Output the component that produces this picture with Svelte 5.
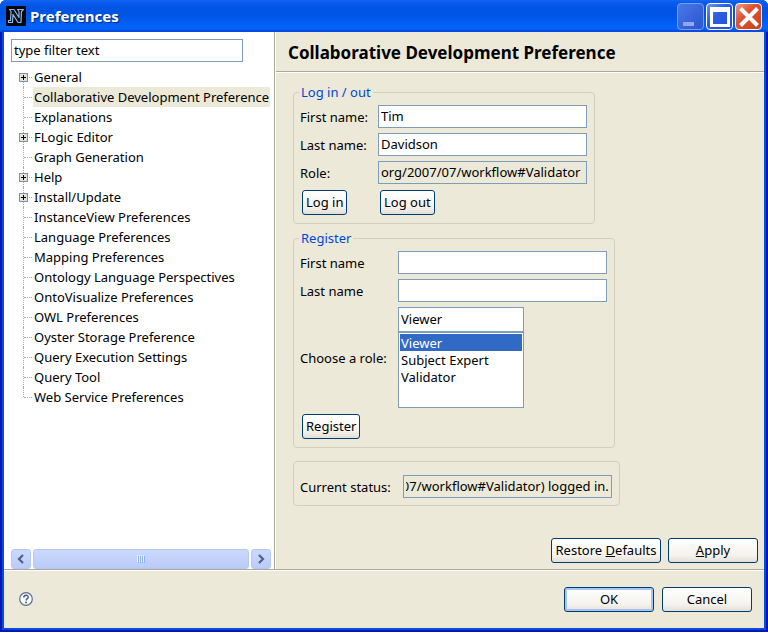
<script>
  const tree = [
    { name: 'General', children: true },
    { name: 'Collaborative Development Preference', selected: true },
    { name: 'Explanations' },
    { name: 'FLogic Editor', children: true },
    { name: 'Graph Generation' },
    { name: 'Help', children: true },
    { name: 'Install/Update', children: true },
    { name: 'InstanceView Preferences' },
    { name: 'Language Preferences' },
    { name: 'Mapping Preferences' },
    { name: 'Ontology Language Perspectives' },
    { name: 'OntoVisualize Preferences' },
    { name: 'OWL Preferences' },
    { name: 'Oyster Storage Preference' },
    { name: 'Query Execution Settings' },
    { name: 'Query Tool' },
    { name: 'Web Service Preferences' }
  ];
  const roles = ['Viewer', 'Subject Expert', 'Validator'];
  let role = $state('Viewer');

  // Long read-only values show their tail end.
  function showEnd(node) {
    node.scrollLeft = node.scrollWidth;
  }
</script>

<div class="window">
  <header class="titlebar">
    <svg class="logo" width="20" height="20" viewBox="0 0 20 20" aria-hidden="true">
      <rect width="20" height="20" rx="1" fill="#05070d" />
      <path d="M2.500 16.500V14.500H4.500L5 5.500 3.500 3.500H8L13 11.500V5.500L11.500 3.500H17.500L15.500 5.500 15 16.500H12L7 8.500 6.500 16.500z" fill="#0a1220" stroke="#8fb4e0" stroke-width="1.200" stroke-linejoin="round" />
    </svg>
    <span class="caption">Preferences</span>
    <button class="wb min" aria-label="Minimize">
      <svg width="26" height="26" viewBox="0 0 26 26"><rect x="5" y="18" width="11" height="4" fill="#8fa8f0" /></svg>
    </button>
    <button class="wb max" aria-label="Maximize">
      <svg width="26" height="26" viewBox="0 0 26 26"><path d="M3 3h20v20H3zM6 8v12h14V8z" fill="#fff" fill-rule="evenodd" /></svg>
    </button>
    <button class="wb close" aria-label="Close">
      <svg width="26" height="26" viewBox="0 0 26 26"><path d="M4.500 4.500l17 17M21.500 4.500L4.500 21.500" stroke="#fff" stroke-width="4" /></svg>
    </button>
  </header>

  <div class="client">
    <div class="panes">
      <nav class="side">
        <input class="text filter" aria-label="Filter" value="type filter text" />
        <ul class="tree">
          {#each tree as item}
            <li class:selected={item.selected}>
              {#if item.children}
                <svg class="plus" width="9" height="9" viewBox="0 0 9 9" aria-hidden="true">
                  <rect x="0.500" y="0.500" width="8" height="8" fill="#e4e2dc" stroke="#7b90ac" />
                  <path d="M2 4.500h5M4.500 2v5" stroke="#000" />
                </svg>
              {/if}
              <a href="#page">{item.name}</a>
            </li>
          {/each}
        </ul>
        <div class="scroll">
          <button class="arrow" aria-label="Scroll left">
            <svg width="8" height="10" viewBox="0 0 8 10"><path d="M6 1L2 5l4 4" fill="none" stroke="#4d6185" stroke-width="2.200" /></svg>
          </button>
          <div class="thumb">
            <svg width="9" height="8" viewBox="0 0 9 8"><path d="M.5 0v7M2.500 0v7M4.500 0v7M6.500 0v7" stroke="#eef4fe" /><path d="M1.500 1v7M3.500 1v7M5.500 1v7M7.500 1v7" stroke="#8cb0f8" /></svg>
          </div>
          <button class="arrow" aria-label="Scroll right">
            <svg width="8" height="10" viewBox="0 0 8 10"><path d="M2 1l4 4-4 4" fill="none" stroke="#4d6185" stroke-width="2.200" /></svg>
          </button>
        </div>
      </nav>

      <main class="page" id="page">
        <h1>Collaborative Development Preference</h1>
        <div class="content">
          <fieldset class="login">
            <legend>Log in / out</legend>
            <label for="l-first">First name:</label>
            <input id="l-first" class="text" value="Tim" />
            <label for="l-last">Last name:</label>
            <input id="l-last" class="text" value="Davidson" />
            <label for="l-role">Role:</label>
            <input id="l-role" class="text" readonly value="org/2007/07/workflow#Validator" use:showEnd />
            <button class="btn small">Log in</button>
            <button class="btn small">Log out</button>
          </fieldset>

          <fieldset class="register">
            <legend>Register</legend>
            <label for="r-first">First name</label>
            <input id="r-first" class="text" />
            <label for="r-last">Last name</label>
            <input id="r-last" class="text" />
            <label for="r-role">Choose a role:</label>
            <div class="combo">
              <input class="text" aria-label="Role" bind:value={role} />
              <select id="r-role" size="4" bind:value={role}>
                {#each roles as r}
                  <option value={r}>{r}</option>
                {/each}
              </select>
            </div>
            <button class="btn small">Register</button>
          </fieldset>

          <div class="status">
            <label for="status">Current status:</label>
            <input id="status" class="text" readonly value="07/workflow#Validator) logged in." use:showEnd />
          </div>
        </div>
        <div class="actions">
          <button class="btn restore">Restore <u>D</u>efaults</button>
          <button class="btn wide"><u>A</u>pply</button>
        </div>
      </main>
    </div>

    <footer>
      <button class="help" aria-label="Help">
        <svg width="14" height="14" viewBox="0 0 14 14">
          <circle cx="7" cy="7" r="6.300" fill="#f8f9fb" stroke="#5d7091" stroke-width="1.200" />
          <path d="M4.800 5.500C4.900 2.600 9.300 2.700 9.200 5.200 9.100 6.700 7.100 6.600 7.100 8.600" fill="none" stroke="#4a5f86" stroke-width="1.500" />
          <rect x="6.200" y="9.600" width="1.700" height="1.700" fill="#4a5f86" />
        </svg>
      </button>
      <button class="btn wide default">OK</button>
      <button class="btn wide">Cancel</button>
    </footer>
  </div>
</div>

<style>
  :global(body) {
    margin: 0;
    background: #fff;
  }
  .window {
    box-sizing: border-box;
    min-height: calc(100vh - 1px);
    display: flex;
    flex-direction: column;
    background: #0019b0;
    border-radius: 6px 6px 0 0;
    overflow: hidden;
    font: 13px/18px 'Noto Sans', 'Open Sans', sans-serif;
    color: #000;
  }
  button,
  input,
  select {
    font: inherit;
    color: inherit;
    margin: 0;
    box-sizing: border-box;
  }
  .titlebar {
    display: flex;
    align-items: center;
    gap: 3px;
    height: 32px;
    box-sizing: border-box;
    padding: 0 6px;
    background: linear-gradient(#1468f0 0, #0a5cf0 2px, #0054e3 8px, #0055e5 16px, #0264fb 26px, #0260f5 30px, #0148d0 32px);
  }
  .caption {
    flex: 1;
    padding-left: 1px;
    font-size: 15px;
    font-weight: 700;
    color: #fff;
    text-shadow: 1px 1px 1px #0a2a80;
  }
  .wb {
    width: 27px;
    height: 27px;
    margin-left: -1px;
    padding: 0;
    border: 1px solid #fff;
    border-radius: 4px;
    display: grid;
    place-items: center;
    background: linear-gradient(135deg, #6f94f0, #2e5fe0 40%, #1f4fd8);
  }
  .min {
    border-color: #7c9cf0;
    background: linear-gradient(135deg, #4a78e6, #2a55cf);
  }
  .close {
    background: linear-gradient(135deg, #ee9a80, #dd5332 40%, #c8401c);
  }
  .client {
    flex: 1;
    display: flex;
    flex-direction: column;
    margin: 0 4px 4px;
    background: #ece9d8;
    box-shadow: 0 0 0 2px #0a4ae0;
  }
  .panes {
    flex: 1;
    display: flex;
    border-bottom: 1px solid #aca899;
    box-shadow: 0 1px #fff;
  }
  .side {
    flex: 0 0 271px;
    display: flex;
    flex-direction: column;
    padding: 7px 3px 0 7px;
    box-sizing: border-box;
    background: #fff;
    border-right: 1px solid #aca899;
  }
  .text {
    height: 23px;
    padding: 0 2px 1px;
    border: 1px solid #7f9db9;
    border-radius: 0;
    background: #fff;
    outline: none;
  }
  .text[readonly] {
    background: #ece9d8;
  }
  .filter {
    width: 232px;
  }
  .tree {
    list-style: none;
    margin: 5px 0 0;
    padding: 0 0 0 12px;
    flex: 1;
  }
  .tree li {
    position: relative;
    height: 20px;
    padding-left: 10px;
    display: flex;
    align-items: center;
  }
  .tree li::before {
    content: '';
    position: absolute;
    left: 0;
    top: 0;
    height: 20px;
    border-left: 1px dotted #a8a8a8;
  }
  .tree li:first-child::before {
    top: 10px;
    height: 10px;
  }
  .tree li:last-child::before {
    height: 10px;
  }
  .tree li::after {
    content: '';
    position: absolute;
    left: 1px;
    top: 10px;
    width: 8px;
    border-top: 1px dotted #a8a8a8;
  }
  .plus {
    position: absolute;
    left: -4px;
    top: 6px;
    z-index: 1;
  }
  .tree a {
    padding: 0 1px;
    line-height: 20px;
    color: #000;
    text-decoration: none;
    white-space: nowrap;
  }
  .selected a {
    background: #ece9d8;
  }
  .scroll {
    display: flex;
    gap: 2px;
    height: 20px;
  }
  .arrow,
  .thumb {
    box-sizing: border-box;
    display: grid;
    place-items: center;
    padding: 0;
    border: 1px solid #b4c8f6;
    border-radius: 3px;
    background: linear-gradient(#cbd9fd, #b9cbf9);
  }
  .arrow {
    width: 20px;
  }
  .thumb {
    flex: 1;
  }
  .page {
    flex: 1;
    display: flex;
    flex-direction: column;
    border-left: 1px solid #fff;
  }
  h1 {
    margin: 0;
    padding: 2px 12px 0;
    line-height: 37px;
    font-size: 17px;
    font-weight: 700;
    border-bottom: 1px solid #aca899;
    box-shadow: 0 1px #fff;
  }
  .content {
    flex: 1;
    display: flex;
    flex-direction: column;
    align-items: flex-start;
    padding: 11px 17px 0;
  }
  fieldset {
    display: grid;
    align-items: center;
    row-gap: 5px;
    margin: 0 0 5px;
    padding: 4px 7px 8px 6px;
    border: 1px solid #d0d0bf;
    border-radius: 4px;
  }
  .login {
    grid-template-columns: 78px 209px;
  }
  .register {
    grid-template-columns: 98px 209px;
  }
  legend {
    margin: 0 0 0 -1px;
    padding: 0 2px;
    color: #0046d5;
  }
  .btn {
    height: 25px;
    padding: 0 3px;
    border: 1px solid #003c74;
    border-radius: 3px;
    background: linear-gradient(#fff, #f4f3ee 70%, #e2dfd4);
    line-height: 23px;
  }
  .small {
    justify-self: start;
    margin: 1px 0 0 2px;
  }
  .combo {
    display: flex;
    flex-direction: column;
    width: 126px;
  }
  .combo .text {
    height: 25px;
  }
  select {
    height: 76px;
    padding: 1px;
    border: 1px solid #7f9db9;
    border-radius: 0;
    background: #fff;
    overflow: hidden;
    outline: none;
  }
  option {
    height: 17px;
    min-height: 17px;
    padding: 0 1px;
    line-height: 17px;
    box-sizing: border-box;
  }
  option:checked {
    background: #316ac5 linear-gradient(#316ac5, #316ac5);
    color: #fff;
    -webkit-text-fill-color: #fff;
  }
  .status {
    display: flex;
    align-items: center;
    gap: 12px;
    margin-top: 8px;
    padding: 13px 7px 7px 6px;
    border: 1px solid #d0d0bf;
    border-radius: 4px;
  }
  .status .text {
    width: 209px;
  }
  .actions {
    display: flex;
    justify-content: flex-end;
    gap: 7px;
    padding: 0 6px 6px;
  }
  .restore {
    width: 110px;
    white-space: nowrap;
  }
  .wide {
    width: 90px;
  }
  footer {
    display: flex;
    gap: 8px;
    padding: 17px 12px 16px 15px;
  }
  .help {
    margin: 5px auto 6px 0;
    padding: 0;
    height: 14px;
    border: 0;
    background: none;
    line-height: 0;
  }
  .default {
    box-shadow: inset 0 0 0 2px #a9c4f0;
  }
</style>
